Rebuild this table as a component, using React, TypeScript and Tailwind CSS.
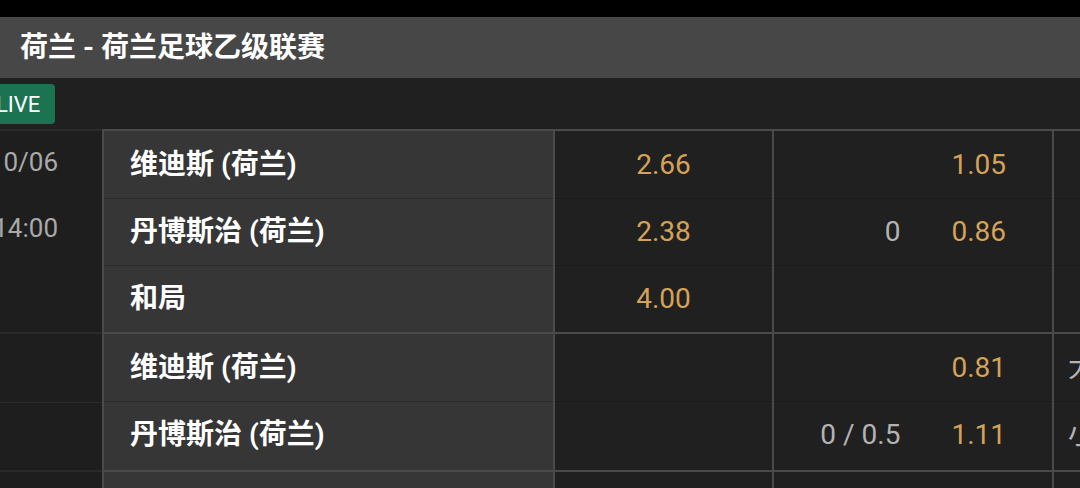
const FONT = "font-['Roboto','Noto_Sans_CJK_SC',sans-serif]";

type Line = { team: string; win?: string; hcp?: string; hcpOdds?: string; extra?: string };

const groups: { date?: [string, string]; lines: Line[] }[] = [
  {
    date: ['10/06', '14:00'],
    lines: [
      { team: '维迪斯 (荷兰)', win: '2.66', hcpOdds: '1.05' },
      { team: '丹博斯治 (荷兰)', win: '2.38', hcp: '0', hcpOdds: '0.86' },
      { team: '和局', win: '4.00' },
    ],
  },
  {
    lines: [
      { team: '维迪斯 (荷兰)', hcpOdds: '0.81', extra: '大' },
      { team: '丹博斯治 (荷兰)', hcp: '0 / 0.5', hcpOdds: '1.11', extra: '小' },
    ],
  },
  { lines: [{ team: '' }] },
];

function Group({ date, lines }: { date?: [string, string]; lines: Line[] }) {
  return (
    <div className="flex">
      {/* date column */}
      <div className="w-[102px] shrink-0 border-t-2 border-[#2a2a2a] bg-[#1e1e1e]">
        {date && (
          <div className="text-[26px] text-[#a9a9a9] pr-[44px] whitespace-nowrap">
            <div className="h-[62px] flex items-center justify-end">{date[0]}</div>
            <div className="h-[70px] flex items-center justify-end">{date[1]}</div>
          </div>
        )}
        {!date &&
          lines.map((_, i) => (
            <div key={i} className={`h-[68px] ${i > 0 ? 'border-t border-[#2a2a2a]' : ''}`} />
          ))}
      </div>

      {/* team names */}
      <div className="w-[451px] shrink-0 border-l-2 border-t-2 border-[#4a4a4a] bg-[#363636]">
        {lines.map((l, i) => (
          <div
            key={i}
            className={`h-[67px] flex items-center pl-[26px] text-[28px] font-bold text-white ${
              i > 0 ? 'border-t border-[#2b2b2b]' : ''
            }`}
          >
            {l.team}
          </div>
        ))}
      </div>

      {/* 1x2 */}
      <div className="w-[219px] shrink-0 border-l-2 border-t-2 border-[#4a4a4a]">
        {lines.map((l, i) => (
          <div
            key={i}
            className={`h-[67px] flex items-center justify-center text-[28px] text-[#d6a258] ${
              i > 0 ? 'border-t border-[#1a1a1a]' : ''
            }`}
          >
            {l.win}
          </div>
        ))}
      </div>

      {/* handicap */}
      <div className="w-[280px] shrink-0 border-l-2 border-t-2 border-[#4a4a4a]">
        {lines.map((l, i) => (
          <div
            key={i}
            className={`h-[67px] flex items-center justify-end gap-[51px] pr-[46px] text-[28px] ${
              i > 0 ? 'border-t border-[#1a1a1a]' : ''
            }`}
          >
            {l.hcp && <span className="text-[#b3b3b3]">{l.hcp}</span>}
            {l.hcpOdds && <span className="text-[#d6a258]">{l.hcpOdds}</span>}
          </div>
        ))}
      </div>

      {/* over / under */}
      <div className="flex-1 border-l-2 border-t-2 border-[#4a4a4a]">
        {lines.map((l, i) => (
          <div
            key={i}
            className={`h-[67px] flex items-center pl-[14px] text-[28px] text-[#b3b3b3] ${
              i > 0 ? 'border-t border-[#1a1a1a]' : ''
            }`}
          >
            {l.extra}
          </div>
        ))}
      </div>
    </div>
  );
}

export default function App() {
  return (
    <div className={`w-[1080px] h-[488px] overflow-hidden bg-[#202020] ${FONT}`}>
      <div className="h-[17px] bg-black" />
      <div className="h-[61px] bg-[#474747] flex items-center px-[20px]">
        <h1 className="text-[28px] font-bold text-white">荷兰 - 荷兰足球乙级联赛</h1>
      </div>
      <div className="h-[51px] pt-[6px]">
        <span className="inline-flex items-center h-[40px] -ml-[16px] pl-[12px] pr-[15px] rounded-[4px] bg-[#1c7352] text-[22px] text-white">
          LIVE
        </span>
      </div>
      {groups.map((g, i) => (
        <Group key={i} {...g} />
      ))}
    </div>
  );
}
